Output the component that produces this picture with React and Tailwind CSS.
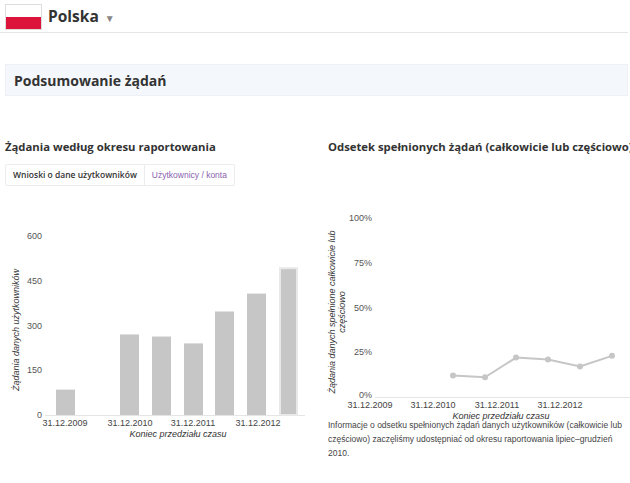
const font = { fontFamily: '"Open Sans", "Liberation Sans", sans-serif' };
const lib = '"Liberation Sans", Arial, sans-serif';

const bars = [
  { x: 56, v: 85 },
  { x: 120, v: 270 },
  { x: 152, v: 263 },
  { x: 184, v: 240 },
  { x: 215, v: 347 },
  { x: 247, v: 407 },
];
const pts = [
  [138, 12], [170, 11], [201, 22], [233, 21], [265, 17], [297, 23],
];

function BarChart() {
  const y = (v) => 190 - (v * 179) / 600;
  return (
    <svg width="315" height="220" className="block" style={{ fontFamily: lib }}>
      {[0, 150, 300, 450, 600].map((t) => (
        <text key={t} x="42" y={y(t) + 3} textAnchor="end" fontSize="9" fill="#555">{t}</text>
      ))}
      <line x1="45" x2="305" y1="190.5" y2="190.5" stroke="#e5e5e5" />
      {bars.map((b) => (
        <rect key={b.x} x={b.x} y={y(b.v)} width="19" height={190 - y(b.v)} fill="#c6c6c6" />
      ))}
      <rect x="280" y={y(492)} width="17" height={190 - y(492)} fill="#c6c6c6" stroke="#e8e8e8" strokeWidth="2" />
      {[['31.12.2009', 65], ['31.12.2010', 130], ['31.12.2011', 193], ['31.12.2012', 258]].map(([l, x]) => (
        <text key={l} x={x} y="201" textAnchor="middle" fontSize="9" fill="#444">{l}</text>
      ))}
      <text x="178" y="212" textAnchor="middle" fontSize="9" fontStyle="italic" fill="#333">Koniec przedziału czasu</text>
      <text transform="translate(19 105) rotate(-90)" textAnchor="middle" fontSize="9" fontStyle="italic" fill="#333">Żądania danych użytkowników</text>
    </svg>
  );
}

function LineChart() {
  const y = (v) => 190 - (v * 179) / 100;
  return (
    <svg width="315" height="215" className="block" style={{ fontFamily: lib }}>
      {[0, 25, 50, 75, 100].map((t) => (
        <text key={t} x="57" y={t === 0 ? y(t) + 1 : y(t) + 3} textAnchor="end" fontSize="9" fill="#555">{t}%</text>
      ))}
      <line x1="60" x2="315" y1="190.5" y2="190.5" stroke="#e5e5e5" />
      <polyline points={pts.map(([x, v]) => `${x},${y(v)}`).join(' ')} fill="none" stroke="#c6c6c6" strokeWidth="2" />
      {pts.map(([x, v]) => (
        <circle key={x} cx={x} cy={y(v)} r="3" fill="#c6c6c6" />
      ))}
      {[['31.12.2009', 55], ['31.12.2010', 118], ['31.12.2011', 182], ['31.12.2012', 245]].map(([l, x]) => (
        <text key={l} x={x} y="201" textAnchor="middle" fontSize="9" fill="#444">{l}</text>
      ))}
      <text x="186" y="212" textAnchor="middle" fontSize="9" fontStyle="italic" fill="#333">Koniec przedziału czasu</text>
      <text transform="translate(20 105) rotate(-90)" textAnchor="middle" fontSize="9" fontStyle="italic" fill="#333">
        <tspan x="0" dy="0">Żądania danych spełnione całkowicie lub</tspan>
        <tspan x="0" dy="10">częściowo</tspan>
      </text>
    </svg>
  );
}

export default function App() {
  return (
    <div className="w-[630px] h-[483px] overflow-hidden bg-white text-[#333]" style={font}>
      <div className="flex items-center gap-[6px] pl-[5px] pt-[2px] h-[33px] border-b border-[#e6e6e6] mr-[2px]">
        <div className="w-[37px] h-[26px] flex flex-col border border-[#ddd]">
          <div className="flex-1 bg-white" />
          <div className="flex-1 bg-[#dc143c]" />
        </div>
        <span className="text-[15.5px] font-bold text-[#333]">Polska</span>
        <span className="text-[10px] text-[#888] mt-[2px]">▼</span>
      </div>

      <div className="mt-[31px] mx-[5px] mr-[2px] h-[32px] bg-[#f4f7fb] border border-[#edf1f6] flex items-center pl-[8px]">
        <span className="text-[14px] font-bold text-[#333]">Podsumowanie żądań</span>
      </div>

      <div className="flex mt-[42px]">
        <div className="w-[315px] pl-[5px]">
          <div className="text-[11.3px] font-bold h-[18px] leading-[18px] whitespace-nowrap">Żądania według okresu raportowania</div>
          <div className="mt-[8px] inline-flex border border-[#ececec] rounded-[2px] text-[8.5px] h-[22px] items-center whitespace-nowrap">
            <span className="px-[7px] text-[#333] font-semibold">Wnioski o dane użytkowników</span>
            <span className="px-[7px] border-l border-[#ececec] h-full flex items-center text-[#8a5fb0]" style={{ fontFamily: lib }}>Użytkownicy / konta</span>
          </div>
          <div className="mt-[39px] -ml-[5px]">
            <BarChart />
          </div>
        </div>
        <div className="w-[315px] pl-[13px]">
          <div className="text-[11.3px] font-bold h-[18px] leading-[18px] whitespace-nowrap">Odsetek spełnionych żądań (całkowicie lub częściowo)</div>
          <div className="mt-[51px] -ml-[13px]">
            <LineChart />
          </div>
          <p className="text-[8.5px] leading-[14px] text-[#444] pr-[8px] -mt-[4px]" style={{ fontFamily: lib }}>
            Informacje o odsetku spełnionych żądań danych użytkowników (całkowicie lub częściowo) zaczęliśmy udostępniać od okresu raportowania lipiec–grudzień 2010.
          </p>
        </div>
      </div>
    </div>
  );
}
